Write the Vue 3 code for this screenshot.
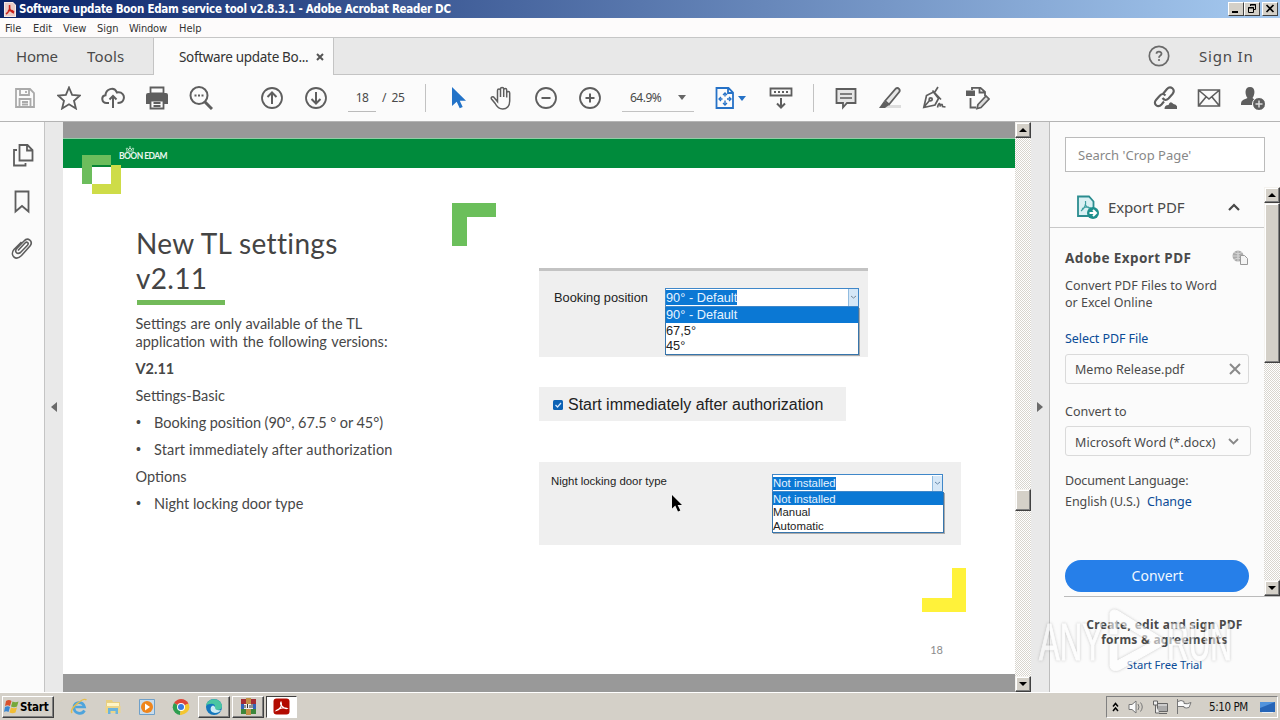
<script setup>
const menus = ['File', 'Edit', 'View', 'Sign', 'Window', 'Help']
</script>

<template>
  <div class="screen">
    <header class="titlebar">
      <svg class="app-icon" width="12" height="15" viewBox="0 0 12 15"><path d="M0 0h9l3 3v12H0z" fill="#f7e9e6"/><path d="M1 1h8l2 2v11H1z" fill="#e8ccc8"/><path d="M2 12c3-2 4-6 3.500-9M4 9c2-1 4-1 6 1M5.500 5c0 3 2 5 4.500 6" fill="none" stroke="#c9231b" stroke-width="1.600"/></svg>
      <span class="title">Software update Boon Edam service tool v2.8.3.1 - Adobe Acrobat Reader DC</span>
      <div class="winbtns">
        <i class="wb"><svg width="14" height="12"><path d="M3 9h6" stroke="#000" stroke-width="2"/></svg></i>
        <i class="wb"><svg width="14" height="12"><path d="M5.500 3V1.500h5v5H9M5 2h6" fill="none" stroke="#000"/><path d="M3.500 4.500h5v5h-5zM3 5h6" fill="none" stroke="#000"/></svg></i>
        <i class="wb last"><svg width="14" height="12"><path d="M3.500 2l7 7M10.500 2l-7 7" stroke="#000" stroke-width="1.700"/></svg></i>
      </div>
    </header>

    <nav class="menubar"><span v-for="m in menus" :key="m" :class="['m', m.toLowerCase()]">{{ m }}</span></nav>

    <div class="tabs">
      <div class="tabgroup"><span class="home">Home</span><span class="tools">Tools</span></div>
      <div class="tab"><span>Software update Bo...</span><svg width="8" height="8" viewBox="0 0 8 8"><path d="M1 1l6 6M7 1L1 7" stroke="#555" stroke-width="2"/></svg></div>
      <div class="tabrest">
        <svg width="22" height="22" viewBox="0 0 22 22"><circle cx="11" cy="11" r="9.700" fill="none" stroke="#6a6a6a" stroke-width="1.700"/><path d="M8.500 8.800C8.500 6 13.500 6 13.500 8.700c0 2-2.500 1.900-2.500 4" fill="none" stroke="#6a6a6a" stroke-width="1.800"/><circle cx="11" cy="15" r="1.100" fill="#6a6a6a"/></svg>
        <span class="signin">Sign In</span>
      </div>
    </div>

    <div class="toolbar">
      <div class="cells first">
        <svg viewBox="0 0 24 24" class="dim"><path d="M3 3h14l4 4v14H3z"/><path d="M7 3v6h9V3M13 5v2M6.500 21v-8h11v8M9 16h6M9 18.500h6"/></svg>
        <svg viewBox="0 0 24 24"><path d="M12 1.500l3.100 7.400 7.900.6-6 5.200 1.900 7.800L12 18.300l-6.900 4.200L7 14.700 1 9.500l7.900-.6z"/></svg>
        <svg viewBox="0 0 24 24"><path d="M8 17H5.500C.5 17-.3 10 4.500 9.300 4.700 3 13 0 16 6.500c5-1 8 3 6.500 7C21.800 16 20 17 16.500 17M12 22V10M8.500 13.500L12 10l3.500 3.500" stroke-width="2"/></svg>
        <svg viewBox="0 0 24 24"><path d="M5.500 1.500h13v6h-13zM5.500 16.500v6h13v-8h-13z"/><path d="M1 9q0-2 2-2h18q2 0 2 2v9h-4.500v-4h-13v4H1z" fill="#5e5e5e" stroke="none"/><path d="M8.500 17h7M8.500 20h7"/></svg>
        <svg viewBox="0 0 24 24"><circle cx="10" cy="9.500" r="8.500" stroke-width="2"/><path d="M16 16l7 7" stroke-width="3"/><path d="M5.500 9.500h2M9 9.500h2M12.500 9.500h2" stroke-width="2"/></svg>
      </div>
      <div class="cells pages">
        <svg viewBox="0 0 24 24"><circle cx="12" cy="12" r="10"/><path d="M12 18V7M7.500 11L12 6.500l4.500 4.500" stroke-width="2"/></svg>
        <svg viewBox="0 0 24 24"><circle cx="12" cy="12" r="10"/><path d="M12 6v11M7.500 13l4.500 4.500 4.500-4.500" stroke-width="2"/></svg>
      </div>
      <div class="pageno">18</div><span class="pagecount">/&nbsp; 25</span>
      <i class="sep s1"></i>
      <div class="cells nav">
        <svg viewBox="0 0 24 24"><path d="M6 1v19l4.700-4.200 3 6.500 3-1.400-2.900-6.200H20z" fill="#2373c8" stroke="none"/></svg>
        <svg viewBox="0 0 24 24"><path d="M7.500 13V4.500c0-2 3-2 3 0V11 3c0-2 3.200-2 3.200 0v8-7c0-2 3-2 3 0v7.500V7c0-2 3-2 3 0v8c0 5-3 8-7 8-4.500 0-6-2.500-7.500-5.500L1.500 13c-1.200-2 1.600-3 2.800-1.300l3.200 4V4.500" stroke-width="1.500"/></svg>
        <svg viewBox="0 0 24 24"><circle cx="12" cy="12" r="10"/><path d="M7.500 12h9" stroke-width="2"/></svg>
        <svg viewBox="0 0 24 24"><circle cx="12" cy="12" r="10"/><path d="M7.500 12h9M12 7.500v9" stroke-width="2"/></svg>
      </div>
      <div class="zoombox"><span>64.9%</span><i class="caret"></i></div>
      <div class="fit"><svg viewBox="0 0 24 24" class="blue"><path d="M3.500 2h12L20 6.500V22H3.500zM15 2v5h5"/><path d="M12 7.500v3M12 14.500v3.500M6.500 13h3M14 13h3.500" stroke-width="1.400"/><path d="M10 9L12 7l2 2M10 17l2 2 2-2M8 11l-2 2 2 2M16 11l2 2-2 2" stroke-width="1.300"/></svg><i class="caret bluec"></i></div>
      <svg class="kbd" viewBox="0 0 24 24"><path d="M1.500 2.500h21v7h-21z"/><path d="M5 6h2M9 6h2M13 6h2M17 6h2" stroke-width="2"/><path d="M12 12v9M8 17.500l4 4 4-4" stroke-width="2"/></svg>
      <i class="sep s2"></i>
      <div class="cells notes">
        <svg viewBox="0 0 24 24"><path d="M2.500 3h19v14H13l-4 4.500V17H2.500z" fill="#e6e6e6"/><path d="M6 8h12M6 12h12" stroke-width="1.500"/></svg>
        <svg viewBox="0 0 24 24"><path d="M4 22h19v-3H9z" fill="#ddd" stroke="none"/><path d="M7 15L17.500 2.800q2-1.500 3.500 0t0 3.500L11 18.500z" fill="#e6e6e6"/><path d="M6 15l5 4-4 3H1z" fill="#5e5e5e" stroke="none"/></svg>
        <svg viewBox="0 0 24 24"><path d="M1.800 21.500L4.500 9.500l7-3.500 5 6.500-3.500 6.500zM2 21l5.500-6.500M10.500 4.500l8.500 9M12.500 6.500L16 1" stroke-width="1.700"/><circle cx="8.700" cy="13.300" r="1.500"/><path d="M15.500 21.500c1-5 3-5 2.500-1 1.500-3 2.500-3 2.500 0l3 .5" stroke-width="1.600"/></svg>
        <svg viewBox="0 0 24 24"><path d="M6 4V1.800h8.500L19 6v4M13.500 2v4.500H19M4.500 12v9.500H10"/><path d="M0 4.500h9v5.500H0z" fill="#5e5e5e" stroke="none"/><path d="M12 18.500l8-8.500 3 3-8 8.500-4 1z" fill="#ddd" stroke-width="1.700"/></svg>
      </div>
      <div class="cells share">
        <svg viewBox="0 0 24 24"><path d="M9.500 8.500l4.500-5.500c3.500-4 9 .5 5.500 5l-4 4.500c-2 2-4 2-6-.5M12.500 9.500c-2-2-4-2-6 .5L3 14c-3.500 4 2 8.500 5.500 4.500l2.500-3" stroke-width="2.100"/><path d="M11.500 23q0-4 4-4 1.500-5 5-1 4 .5 4 5z" fill="#5e5e5e" stroke="none"/></svg>
        <svg viewBox="0 0 24 24"><path d="M1.500 4h21v16h-21zM1.500 4L12 13 22.500 4M1.500 20l7.500-9M22.500 20L15 11" stroke-width="1.600"/></svg>
        <svg viewBox="0 0 24 24"><path d="M9 1c6 0 5 8 2.500 11l2.500 2v5H0c0-5 2-5 6.500-7C4 9 3 1 9 1z" fill="#5e5e5e" stroke="none"/><circle cx="18" cy="18" r="6.500" fill="#5e5e5e" stroke="#fff" stroke-width="1"/><path d="M14.500 18h7M18 14.500v7" stroke="#ddd" stroke-width="1.500"/></svg>
      </div>
    </div>

    <main class="work">
      <aside class="rail">
        <svg viewBox="0 0 24 24"><path d="M8.500 2h8l5 5v10.500h-13zM16 2v5.500h5.500M6 7H3v15.500h11.500V20"/></svg>
        <svg viewBox="0 0 24 24"><path d="M4.500 1.500h13v20L11 16l-6.500 5.500z"/></svg>
        <svg viewBox="0 0 24 24"><path d="M7 14.500l7-7.500c2-2 4.300 0 2.500 2.200L9.500 16.500c-3.500 2.500-6.500-1-3.500-4.200L13 5c4-4.500 9.500.5 6 5l-8.500 9.500c-6 6-12-.5-7.500-6L10.500 6" transform="translate(0 -1)" stroke-width="1.600"/></svg>
      </aside>
      <div class="split lefts"><i></i></div>
      <section class="doc">
        <div class="slide">
          <div class="banner">
            <svg width="12" height="6" viewBox="0 0 12 6"><path d="M2 5h8M3 4C1 2 4 1 4.500 4M7.500 4c.5-3 3.500-2 1.500 0M4.500 4c0-2 3-2 3 0M6 0v3" fill="none" stroke="#d8f0df" stroke-width=".9"/></svg>
            <b>BOON EDAM</b>
          </div>
          <svg class="logo" width="40" height="40"><path d="M0 0h29v10H10v19H0z" fill="#6cbd5c"/><path d="M29 10h10v29H10V29h19z" fill="#cedc48"/><path d="M10 12h19v17H10z" fill="#fff"/><path d="M10 10h19v2H10z" fill="#078434"/></svg>
          <svg class="corner green" width="44" height="43"><path d="M0 0h44v14H15v29H0z" fill="#6bbf5b"/></svg>
          <svg class="corner yellow" width="44" height="44"><path d="M30 0h14v44H0V30h30z" fill="#fff23a"/></svg>
          <div class="columns">
            <article>
              <h1><span class="h1a">New TL settings</span><br><span class="h1b">v2.11</span></h1>
              <hr>
              <p class="l1">Settings are only available of the TL</p>
              <p class="l2">application with the following versions:</p>
              <p class="gap l3"><b>V2.11</b></p>
              <p class="gap l4">Settings-Basic</p>
              <p class="gap li l5">Booking position (90°, 67.5 ° or 45°)</p>
              <p class="gap li l6">Start immediately after authorization</p>
              <p class="gap l7">Options</p>
              <p class="gap li l8">Night locking door type</p>
            </article>
            <div class="figures">
              <div class="fig f1">
                <span class="lbl">Booking position</span>
                <div class="combo">
                  <div class="field"><mark>90° - Default</mark><i><svg width="7" height="5"><path d="M1 1l2.500 2L6 1" fill="none" stroke="#789"/></svg></i></div>
                  <div class="opts"><p class="on">90° - Default</p><p>67,5°</p><p>45°</p></div>
                </div>
              </div>
              <div class="fig f2"><svg width="10" height="10"><rect width="10" height="10" rx="1.500" fill="#0b62b5"/><path d="M2.500 5l2 2 3.500-4" fill="none" stroke="#d6e9ff" stroke-width="1.200"/></svg><span>Start immediately after authorization</span></div>
              <div class="fig f3">
                <span class="lbl">Night locking door type</span>
                <div class="combo">
                  <div class="field"><mark>Not installed</mark><i><svg width="7" height="5"><path d="M1 1l2.500 2L6 1" fill="none" stroke="#68a"/></svg></i></div>
                  <div class="opts"><p class="on">Not installed</p><p>Manual</p><p>Automatic</p></div>
                </div>
              </div>
              <div class="num">18</div>
            </div>
          </div>
        </div>
      </section>
      <div class="scroll docscroll"><i class="btn up"></i><i class="thumb"></i><i class="btn down"></i></div>
      <div class="split rights"><i></i></div>
      <aside class="panel">
        <div class="search">Search 'Crop Page'</div>
        <div class="toolarea">
          <div class="toolmain">
            <div class="exphead">
              <svg width="24" height="24" viewBox="0 0 24 24"><path d="M2 1.500h11l4.500 5V21H2z" fill="#d9f0f3" stroke="#2b8c8f" stroke-width="1.800"/><path d="M5 16c4-3 5-7 4.500-10M9 9c1 3 3 4 6 4M6 13.500c2-1 4-1.500 7-1.500" fill="none" stroke="#3d9ea0" stroke-width="1.200"/><circle cx="17" cy="18" r="6" fill="#1d8f8c"/><path d="M13.500 18h6M17 15l3 3-3 3" fill="none" stroke="#fff" stroke-width="2"/></svg>
              <span>Export PDF</span>
              <svg width="12" height="8"><path d="M1 7l5-5 5 5" fill="none" stroke="#484848" stroke-width="2.200"/></svg>
            </div>
            <div class="expbody">
              <div class="aph"><b>Adobe Export PDF</b><svg width="17" height="16"><circle cx="6" cy="6" r="5.500" fill="#aaa"/><path d="M0 6h12M6 0v12M2 2.500q4 3 8 0M2 9.500q4-3 8 0" fill="none" stroke="#e8e8e8" stroke-width=".7"/><path d="M8.500 5.500h4l3 3v6h-7z" fill="#f4f4f4" stroke="#999"/></svg></div>
              <p class="desc">Convert PDF Files to Word<br><span>or Excel Online</span></p>
              <a class="select">Select PDF File</a>
              <div class="box"><span>Memo Release.pdf</span><svg width="12" height="12"><path d="M1 1l10 10M11 1L1 11" stroke="#8a8a8a" stroke-width="2"/></svg></div>
              <p class="ct">Convert to</p>
              <div class="box b2"><span>Microsoft Word (*.docx)</span><svg width="11" height="7"><path d="M1 1l4.500 4.500L10 1" fill="none" stroke="#888" stroke-width="1.800"/></svg></div>
              <p class="dl">Document Language:</p>
              <p class="en">English (U.S.) <a>Change</a></p>
              <div class="convert">Convert</div>
            </div>
          </div>
          <div class="scroll pscroll"><i class="btn up"></i><i class="thumb"></i><i class="btn down"></i></div>
        </div>
        <div class="promo"><b class="p1">Create, edit and sign PDF</b><b class="p2">forms &amp; agreements</b><a>Start Free Trial</a></div>
      </aside>
    </main>

    <footer class="taskbar">
      <div class="start"><svg width="16" height="15" viewBox="0 0 16 15"><path d="M2 2q3-2 5.500 0L6 7Q3.500 5.500 1 7z" fill="#d9512c"/><path d="M8.500 2.500q3 1.500 6 0L13 7.500q-3 1.500-6 0z" fill="#76a83a"/><path d="M1 8q3-1.500 5 0l-1.500 5Q2 11.500 0 13z" fill="#3b87d1"/><path d="M7 8.500q3 1.500 6 0l-1.500 5q-3 1.500-6 0z" fill="#f1bd35"/></svg><b>Start</b></div>
      <div class="task"><svg width="18" height="18" viewBox="0 0 18 18"><path d="M14.500 12.500C12 17 4 16 4 9.500S13 3 14.500 9H5.500" fill="none" stroke="#4ea4dc" stroke-width="2.700"/><path d="M2 15C-1 11 13-1 16.500 2" fill="none" stroke="#e5bd4d" stroke-width="1.500"/></svg></div>
      <div class="task"><svg width="18" height="18" viewBox="0 0 18 18"><path d="M2 2h6l1 2h7v9H2z" fill="#e8cf80"/><path d="M3 5h12v4H3z" fill="#fff5c5"/><path d="M1.500 8h15v7h-15z" fill="#ecd589"/><path d="M4 10h10v6h-2.500v-3h-5v3H4z" fill="#6cb4dc"/></svg></div>
      <div class="task"><svg width="18" height="18" viewBox="0 0 18 18"><path d="M1.500 1.500h15v15h-15z" fill="#c9dcec" stroke="#6fa0c9"/><circle cx="9" cy="9" r="6" fill="#ef851c"/><path d="M7 5.500l5 3.500-5 3.500z" fill="#fff"/></svg></div>
      <div class="task"><svg width="18" height="18" viewBox="0 0 18 18"><path d="M9 9L2 5Q5 1 9 1q5 0 7.500 4.500z" fill="#df4638"/><path d="M9 9L2 5q-3 5 1 9.500 2 2 5 2.500z" fill="#2e9e50"/><path d="M9 9l7.500-3.500Q20 14 9 17H8z" fill="#f4c62f"/><circle cx="9" cy="9" r="4" fill="#fff"/><circle cx="9" cy="9" r="3" fill="#397be0"/></svg></div>
      <div class="task raised"><svg width="18" height="18" viewBox="0 0 18 18"><circle cx="9" cy="9" r="8" fill="#1477bd"/><path d="M1 8C2-1 16-1 17 8q0 4-5 4-3 0-2-3 0-4-5-3-3 0-4 2z" fill="#4bc6a1"/><path d="M10 9q0 4 6 3-2 3-6 3-6-1-4-6 2-3 4 0" fill="#ccebf4"/></svg></div>
      <div class="task raised"><svg width="17" height="17" viewBox="0 0 17 17"><path d="M1 1h15v5H1z" fill="#a52d35"/><path d="M1 6h15v5H1z" fill="#3463b8"/><path d="M1 11h15v5H1z" fill="#3c873c"/><path d="M6 0h5v17H6z" fill="#c29147"/><path d="M4 6h9v5H4z" fill="#eee"/><path d="M5 7v3M7.500 6v4M10 7v3M12 6v4" stroke="#333"/></svg></div>
      <div class="task pressed"><svg width="17" height="17" viewBox="0 0 17 17"><rect x=".5" y=".5" width="16" height="16" rx="3" fill="#b30b00"/><path d="M3.500 12.500c4-1 6-6 4.500-8.500-1.500 2 2 7 6 6.500-2-1.500-8-.5-10.500 2z" fill="none" stroke="#fff" stroke-width="1.200"/></svg></div>
      <div class="tray">
        <svg class="chev" width="7" height="10"><path d="M1 4.500l2.500-3 2.500 3M1 9l2.500-3L6 9" fill="none" stroke="#000" stroke-width="1.500"/></svg>
        <svg class="vol" width="17" height="14"><path d="M1 4.500h3l4-3.500v12L4 9.500H1z" fill="#fafafa" stroke="#777"/><path d="M10 4q2 3 0 6M12.500 2.500q3.500 4.500 0 9" fill="none" stroke="#777"/></svg>
        <svg class="net" width="17" height="16"><path d="M5.500 4.500h10v8h-10z" fill="#aaa" stroke="#666"/><path d="M6 5.500h9v1H6z" fill="#eee"/><path d="M7 14.500h8M1.500 2v4h4V2zM3.500 6v8h4" fill="#eee" stroke="#666"/></svg>
        <svg class="flag" width="17" height="15"><path d="M1.500 0v15M2 2.500q3-2 6 0v2q3 1 7-1l-2 5q-3 1-5 0v-1H2" fill="#fafafa" stroke="#777"/></svg>
        <span>5:10 PM</span>
        <svg class="desk" width="15" height="12"><path d="M0 1h15v10H0z" fill="#2665b7"/><path d="M0 1h15L0 7z" fill="#5193dc"/><path d="M2 11.500h11" stroke="#e8eef5"/></svg>
      </div>
    </footer>

    <svg class="cursor" width="12" height="19"><path d="M1 1v13.500l3.300-3 2.700 6 2.300-1-2.700-5.500H11z" fill="#000"/></svg>
    <svg class="wm" width="210" height="74" viewBox="0 0 210 74">
      <text x="4" y="52" textLength="64" lengthAdjust="spacingAndGlyphs">ANY</text>
      <text x="132" y="52" textLength="65" lengthAdjust="spacingAndGlyphs">RUN</text>
      <path d="M75 5q2-5 8-2l45 28q4 3 0 6L84 62q-8 2-9-4V36h7v17l35-19-35-21v13h-7z"/>
    </svg>
  </div>
</template>

<style>
body { margin: 0; overflow: hidden; }
</style>
<style scoped>
* { box-sizing: border-box; }
p, h1 { margin: 0; font-weight: 400; }
i { font-style: normal; display: block; }
svg { display: block; flex: none; }
span, b, a { white-space: nowrap; }
.screen { position: relative; width: 1280px; height: 720px; overflow: hidden; display: flex; flex-direction: column; background: #fbfbfb; font-family: "Noto Sans", sans-serif; color: #4a4a4a; }
.titlebar { height: 18px; flex: none; display: flex; align-items: center; padding: 0 2px 0 4px; background: linear-gradient(90deg, #0a246a, #a6caf0); }
.title { margin-left: 3px; color: #fff; font: bold 11.500px/18px "DejaVu Sans Condensed", "DejaVu Sans", sans-serif; font-stretch: condensed; letter-spacing: -.27px; }
.winbtns { margin-left: auto; display: flex; }
.wb { width: 16px; height: 14px; background: #d4d0c8; border: 1px solid; border-color: #fff #404040 #404040 #fff; }
.wb.last { margin-left: 2px; }
.menubar { height: 19px; flex: none; display: flex; background: #fdfbfb; font: 11px/21px "DejaVu Sans Condensed", "DejaVu Sans", sans-serif; font-stretch: condensed; color: #333; padding-left: 5px; }
.m { letter-spacing: -.05px; }
.file { width: 28px; } .edit { width: 30px; } .view { width: 34px; } .sign { width: 32px; } .window { width: 50px; }
.window { letter-spacing: -.2px; }
.tabs { height: 38px; flex: none; display: flex; border-top: 1px solid #c6c6c6; font-size: 15px; }
.tabgroup { width: 154px; display: flex; background: #e8e8e8; border-right: 1px solid #c4c4c4; border-bottom: 1px solid #c4c4c4; line-height: 36px; padding-left: 16px; }
.home { width: 71px; letter-spacing: -.2px; }
.tools { letter-spacing: .2px; }
.tab { width: 179px; background: #fbfbfb; display: flex; align-items: center; padding-left: 25px; font-size: 13.500px; color: #333; }
.tab span { width: 137px; letter-spacing: -.32px; }
.tabrest { flex: 1; display: flex; align-items: center; background: #e8e8e8; border-left: 1px solid #c4c4c4; border-bottom: 1px solid #c4c4c4; padding-left: 814px; gap: 29px; }
.signin { letter-spacing: .8px; }
.toolbar { height: 47px; flex: none; display: flex; align-items: center; border-bottom: 1px solid #b4b4b4; background: #fbfbfb; padding-left: 3px; }
.toolbar svg, .rail svg { width: 24px; height: 24px; fill: none; stroke: #5e5e5e; stroke-width: 1.8; }
.toolbar .dim { stroke: #aaa; }
.toolbar .blue { stroke: #2672c7; }
.cells { display: flex; gap: 20px; padding: 0 10px; }
.pages { margin-left: 27px; }
.pageno { width: 28px; height: 28px; margin-left: 10px; border-bottom: 1px solid #bbb; font-size: 12px; line-height: 28px; text-align: center; letter-spacing: -.6px; }
.pagecount { width: 30px; margin-left: 6px; font-size: 12px; line-height: 28px; letter-spacing: -.4px; }
.sep { width: 1px; height: 28px; background: #c2c2c2; }
.s1 { margin-left: 13px; }
.nav { margin-left: 10px; }
.zoombox { width: 72px; height: 28px; margin-left: 10px; padding: 0 8px; display: flex; align-items: center; justify-content: space-between; border-bottom: 1px solid #c2c2c2; font-size: 12px; letter-spacing: -.5px; }
.caret { border: 4px solid transparent; border-top: 5px solid #666; border-bottom: 0; }
.bluec { border-top-color: #2672c7; }
.fit { margin-left: 19px; display: flex; align-items: center; gap: 1px; }
.kbd { margin-left: 23px; }
.s2 { margin-left: 20px; }
.notes { margin-left: 10px; }
.share { margin-left: 143px; }
.work { height: 570px; flex: none; display: flex; }
.rail { width: 45px; border-right: 1px solid #c4c4c4; padding: 21px 0 0 11px; display: flex; flex-direction: column; gap: 23px; }
.split { background: #e9e9e9; display: flex; align-items: center; justify-content: center; }
.split i { border: 5px solid transparent; }
.lefts { width: 18px; } .lefts i { border-right: 6px solid #6a6a6a; border-left: 0; }
.rights { width: 19px; padding-right: 2px; } .rights i { border-left: 6px solid #6a6a6a; border-right: 0; }
.doc { width: 952px; background: #999; padding-top: 16px; height: 570px; }
.slide { position: relative; height: 536px; background: #fff; border-top: 1px solid #8fcfa5; }
.banner { height: 29px; background: #008b3c; padding: 7px 0 0 56px; color: #e9f7ee; }
.banner svg { margin-left: 5px; }
.banner b { display: block; font: bold 8.500px/9px Lato, sans-serif; letter-spacing: -.55px; }
.logo { position: absolute; left: 19px; top: 16px; }
.green { position: absolute; left: 389px; top: 64px; }
.yellow { position: absolute; right: 49px; top: 429px; }
.columns { display: flex; padding-left: 73px; font-family: Lato, sans-serif; color: #474747; }
article { width: 403px; padding-top: 58px; }
h1 { font-size: 28px; line-height: 35px; color: #444; }
.h1a { letter-spacing: .35px; }
.h1b { letter-spacing: .3px; }
hr { width: 88px; height: 5px; margin: 4px 0 10px 1px; border: 0; background: #72ba59; }
article p { font-size: 14.500px; line-height: 18px; white-space: nowrap; }
article .l1 { word-spacing: .45px; }
article .l2 { word-spacing: 1.1px; }
article .l5 { word-spacing: -.2px; }
article .l6 { letter-spacing: .155px; }
article .l1, article .l2, article .l3, article .l4, article .l7 { margin-left: -.5px; }
article .gap { margin-top: 9px; }
.li { padding-left: 18px; position: relative; }
.li::before { content: "•"; position: absolute; left: 0; top: -1px; font: 14px/18px "Liberation Sans", sans-serif; }
.figures { width: 476px; padding-top: 100px; font-family: "Liberation Sans", Arial, sans-serif; color: #222; }
.fig { background: #efefef; display: flex; }
.f1 { width: 329px; height: 89px; border-top: 3px solid #c3c3c3; padding: 17px 0 0 15px; font-size: 12.800px; }
.f1 .lbl { width: 111px; line-height: 19px; }
.combo { color: #222; }
.f1 .combo { width: 194px; }
.field { background: #fff; border: 1px solid #3f87c9; display: flex; justify-content: space-between; }
.field i { border-left: 1px solid #91bce0; background: #d5e7f7; display: flex; align-items: center; justify-content: center; width: 10px; margin: -1px 0; }
mark { background: #0b78d4; color: #e5f3ff; }
.f1 .field { height: 19px; width: 194px; padding: 1px 0; line-height: 15px; }
.opts { background: #fff; border: 1px solid #3775ac; border-top: 0; box-shadow: 1px 1px 0 #aaa; }
.on { background: #0b78d4; color: #e5f3ff; }
.f1 .opts p { height: 15.500px; line-height: 16.500px; }
.f2 { width: 307px; height: 34px; margin-top: 30px; align-items: center; padding: 1px 0 0 14px; gap: 5px; font-size: 16px; }
.f2 span { letter-spacing: -.02px; }
.f3 { width: 422px; height: 83px; margin-top: 41px; padding: 12px 0 0 12px; font-size: 11.400px; }
.f3 .lbl { width: 221px; line-height: 15px; }
.f3 .combo { width: 172px; }
.f3 .field { height: 18px; width: 171px; padding: 2px 0 1px; line-height: 13px; }
.f3 .opts p { height: 13.300px; line-height: 14px; }
.num { width: 404px; margin-top: 96px; text-align: right; color: #8b8b8b; font: 11px/17px Lato, sans-serif; }
.scroll { width: 16px; display: flex; flex-direction: column; background: repeating-conic-gradient(#d8d5ce 0 25%, #fff 0 50%) 0 0 / 2px 2px; }
.btn, .thumb { background: #d4d0c8; border: 1px solid; border-color: #f4f2ee #404040 #404040 #f4f2ee; box-shadow: inset -1px -1px 0 #808080, inset 1px 1px 0 #fff; flex: none; }
.btn { height: 16px; display: flex; align-items: center; justify-content: center; }
.btn::after { content: ""; border: 4px solid transparent; }
.up::after { border-bottom-color: #000; border-top: 0; }
.down::after { border-top-color: #000; border-bottom: 0; }
.down { margin-top: auto; }
.docscroll { height: 570px; }
.docscroll .thumb { margin-top: 351px; height: 22px; }
.panel { width: 230px; border-left: 1px solid #bdbdbd; margin-left: -1px; flex: 1; }
.search { margin: 15px 0 0 15px; width: 200px; height: 35px; border: 1px solid #bbb; background: #fff; padding-left: 12px; line-height: 34px; color: #888; font-size: 13px; white-space: nowrap; }
.toolarea { display: flex; height: 409px; margin-top: 15px; }
.toolmain { width: 214px; flex: none; }
.exphead { display: flex; align-items: center; height: 41px; padding-left: 26px; border-bottom: 1px solid #c8c8c8; font-size: 15px; }
.exphead span { margin-left: 8px; width: 120px; letter-spacing: -.15px; }
.expbody { padding-left: 15px; font-size: 12.500px; }
.aph { display: flex; justify-content: space-between; width: 184px; height: 22px; margin-top: 19px; align-items: center; font-size: 13.500px; letter-spacing: .4px; }
.desc { line-height: 17px; margin-top: 8px; }
a { color: #0a4b97; }
.select { display: block; margin-top: 19px; line-height: 18px; letter-spacing: -.07px; }
.box { margin-top: 6px; width: 184px; height: 30px; border: 1px solid #dadada; border-radius: 3px; display: flex; align-items: center; justify-content: space-between; padding: 0 7px 0 9px; }
.ct { margin-top: 19px; line-height: 18px; }
.b2 { margin-top: 5px; width: 186px; padding-right: 11px; }
.b2 span { padding-top: 2px; letter-spacing: .07px; }
.dl { margin-top: 16px; line-height: 18px; letter-spacing: -.17px; }
.en { margin-top: 3px; line-height: 18px; white-space: nowrap; letter-spacing: -.07px; }
.en a { margin-left: 4px; }
.convert { width: 184px; height: 32px; margin-top: 49px; border-radius: 16px; background: #267fe9; color: #f1f8ff; text-align: center; font-size: 14px; line-height: 31px; padding-left: 1px; }
.pscroll { height: 409px; }
.pscroll .thumb { height: 160px; }
.promo { margin-left: 14px; border-top: 1px solid #bbb; height: 95px; display: flex; flex-direction: column; align-items: center; padding: 20px 15px 0 0; font-size: 12px; line-height: 15px; }
.p1 { letter-spacing: .28px; } .p2 { letter-spacing: .22px; }
.promo a { margin-top: 10px; font-size: 11.200px; letter-spacing: -.05px; }
.taskbar { height: 28px; flex: none; background: #d4d0c8; border-top: 1px solid #fff; display: flex; align-items: center; padding-left: 2px; }
.start { width: 52px; height: 22px; display: flex; align-items: center; padding-left: 1px; border: 1px solid; border-color: #fff #404040 #404040 #fff; box-shadow: inset -1px -1px 0 #808080; color: #000; font: bold 11.500px "DejaVu Sans Condensed", sans-serif; font-stretch: condensed; letter-spacing: -.2px; margin-right: 8px; }
.task { width: 34px; height: 22px; display: flex; align-items: center; justify-content: center; }
.raised { width: 32px; margin-right: 2px; border: 1px solid; border-color: #fff #404040 #404040 #fff; box-shadow: inset -1px -1px 0 #808080; }
.pressed { width: 31px; border: 1px solid; border-color: #404040 #fff #fff #404040; background: #fff; }
.tray { width: 172px; height: 22px; margin: 0 2px 0 auto; display: flex; align-items: center; border: 1px solid; border-color: #808080 #fff #fff #808080; color: #111; font: 11.500px "DejaVu Sans Condensed", sans-serif; font-stretch: condensed; padding-left: 5px; }
.vol { margin-left: 9px; } .net { margin-left: 7px; } .flag { margin-left: 7px; }
.tray span { width: 41px; margin-left: 16px; letter-spacing: -.4px; }
.desk { margin: 1px 0 0 10px; }
.cursor { position: absolute; left: 671px; top: 494px; }
.wm { position: absolute; left: 1035px; top: 608px; overflow: visible; fill: #fff; stroke: #fff; stroke-width: 1px; opacity: .58; font: 52px "Liberation Sans", sans-serif; filter: drop-shadow(0 0 1.5px rgba(90, 90, 90, .55)); }
</style>
